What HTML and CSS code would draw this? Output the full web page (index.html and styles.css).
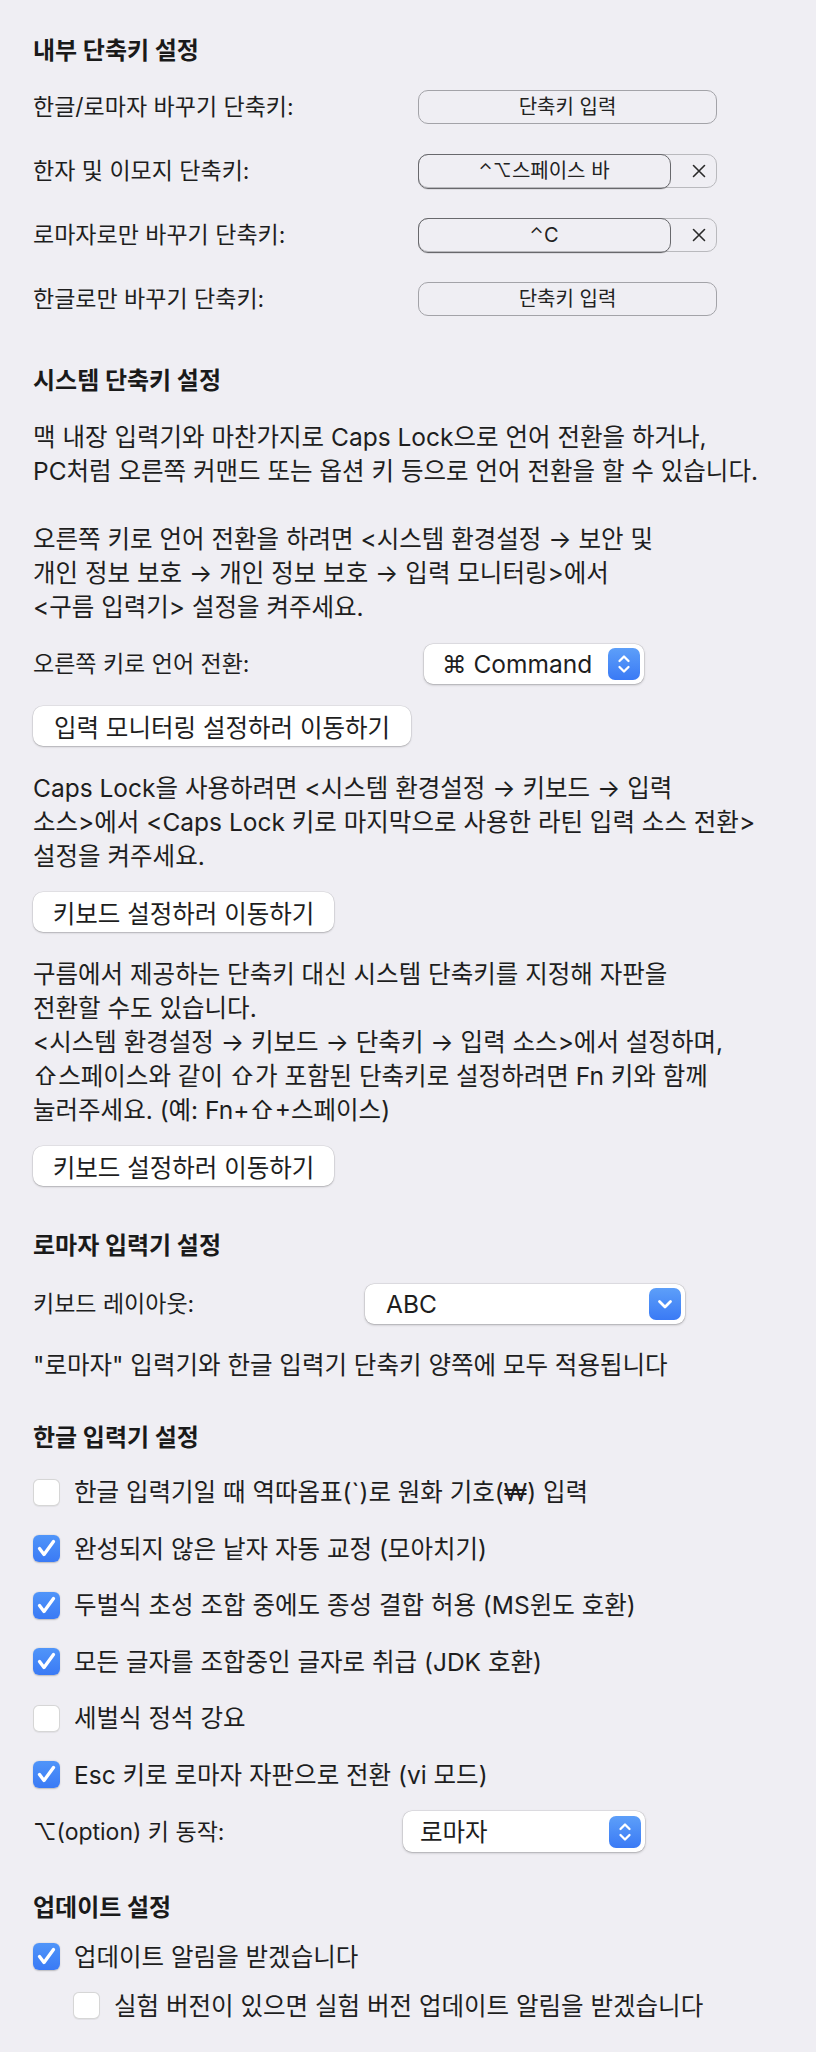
FILE: index.html
```html
<!DOCTYPE html>
<html lang="ko">
<head>
<meta charset="utf-8">
<title>구름 입력기 설정</title>
<link rel="stylesheet" href="styles.css">
</head>
<body>
<main class="prefs">

  <section class="sec sec-first">
    <h2 class="sec-title">내부 단축키 설정</h2>
    <div class="shortcut-rows">
      <div class="row row-shortcut">
        <span class="label">한글/로마자 바꾸기 단축키:</span>
        <button class="shortcut">단축키 입력</button>
      </div>
      <div class="row row-shortcut">
        <span class="label">한자 및 이모지 단축키:</span>
        <div class="shortcut shortcut-set">
          <span class="keys"><span class="mod">⌃⌥</span>스페이스 바</span>
          <span class="clear"><svg viewBox="0 0 16 16" width="16" height="16"><path d="M2.5 2.5L13.5 13.5M13.5 2.5L2.5 13.5"/></svg></span>
        </div>
      </div>
      <div class="row row-shortcut">
        <span class="label">로마자로만 바꾸기 단축키:</span>
        <div class="shortcut shortcut-set">
          <span class="keys"><span class="mod">⌃</span>C</span>
          <span class="clear"><svg viewBox="0 0 16 16" width="16" height="16"><path d="M2.5 2.5L13.5 13.5M13.5 2.5L2.5 13.5"/></svg></span>
        </div>
      </div>
      <div class="row row-shortcut">
        <span class="label">한글로만 바꾸기 단축키:</span>
        <button class="shortcut">단축키 입력</button>
      </div>
    </div>
  </section>

  <section class="sec">
    <h2 class="sec-title">시스템 단축키 설정</h2>
    <div class="text text-first">
      <p>맥 내장 입력기와 마찬가지로 Caps Lock으로 언어 전환을 하거나,<br>PC처럼 오른쪽 커맨드 또는 옵션 키 등으로 언어 전환을 할 수 있습니다.</p>
      <p>오른쪽 키로 언어 전환을 하려면 &lt;시스템 환경설정 → 보안 및<br>개인 정보 보호 → 개인 정보 보호 → 입력 모니터링&gt;에서<br>&lt;구름 입력기&gt; 설정을 켜주세요.</p>
    </div>
    <div class="row row-rightkey">
      <span class="label">오른쪽 키로 언어 전환:</span>
      <div class="popup popup-cmd">
        <span class="popup-value">⌘ Command</span>
        <span class="stepper"><svg viewBox="0 0 32 32" width="32" height="32"><path d="M11.5 13L16 8.5L20.5 13M11.5 19L16 23.5L20.5 19"/></svg></span>
      </div>
    </div>
    <button class="btn btn-monitor">입력 모니터링 설정하러 이동하기</button>
    <div class="text">
      <p>Caps Lock을 사용하려면 &lt;시스템 환경설정 → 키보드 → 입력<br>소스&gt;에서 &lt;Caps Lock 키로 마지막으로 사용한 라틴 입력 소스 전환&gt;<br>설정을 켜주세요.</p>
    </div>
    <button class="btn btn-kbd">키보드 설정하러 이동하기</button>
    <div class="text">
      <p>구름에서 제공하는 단축키 대신 시스템 단축키를 지정해 자판을<br>전환할 수도 있습니다.<br>&lt;시스템 환경설정 → 키보드 → 단축키 → 입력 소스&gt;에서 설정하며,<br>⇧스페이스와 같이 ⇧가 포함된 단축키로 설정하려면 Fn 키와 함께<br>눌러주세요. (예: Fn+⇧+스페이스)</p>
    </div>
    <button class="btn btn-kbd">키보드 설정하러 이동하기</button>
  </section>

  <section class="sec sec-roman">
    <h2 class="sec-title">로마자 입력기 설정</h2>
    <div class="row row-layout">
      <span class="label">키보드 레이아웃:</span>
      <div class="popup popup-layout">
        <span class="popup-value">ABC</span>
        <span class="stepper"><svg viewBox="0 0 32 32" width="32" height="32"><path class="thick" d="M10.5 13.5L16 19L21.5 13.5"/></svg></span>
      </div>
    </div>
    <p class="note">"로마자" 입력기와 한글 입력기 단축키 양쪽에 모두 적용됩니다</p>
  </section>

  <section class="sec sec-hangul">
    <h2 class="sec-title">한글 입력기 설정</h2>
    <div class="checks">
      <label class="check"><span class="box"></span><span>한글 입력기일 때 역따옴표(`)로 원화 기호(₩) 입력</span></label>
      <label class="check"><span class="box on"><svg viewBox="0 0 27 27" width="27" height="27"><path d="M6.5 13.5L11 19.5L20.5 6.5"/></svg></span><span>완성되지 않은 낱자 자동 교정 (모아치기)</span></label>
      <label class="check"><span class="box on"><svg viewBox="0 0 27 27" width="27" height="27"><path d="M6.5 13.5L11 19.5L20.5 6.5"/></svg></span><span>두벌식 초성 조합 중에도 종성 결합 허용 (MS윈도 호환)</span></label>
      <label class="check"><span class="box on"><svg viewBox="0 0 27 27" width="27" height="27"><path d="M6.5 13.5L11 19.5L20.5 6.5"/></svg></span><span>모든 글자를 조합중인 글자로 취급 (JDK 호환)</span></label>
      <label class="check"><span class="box"></span><span>세벌식 정석 강요</span></label>
      <label class="check"><span class="box on"><svg viewBox="0 0 27 27" width="27" height="27"><path d="M6.5 13.5L11 19.5L20.5 6.5"/></svg></span><span>Esc 키로 로마자 자판으로 전환 (vi 모드)</span></label>
    </div>
    <div class="row row-option">
      <span class="label">⌥(option) 키 동작:</span>
      <div class="popup popup-option">
        <span class="popup-value">로마자</span>
        <span class="stepper"><svg viewBox="0 0 32 32" width="32" height="32"><path d="M11.5 13L16 8.5L20.5 13M11.5 19L16 23.5L20.5 19"/></svg></span>
      </div>
    </div>
  </section>

  <section class="sec sec-update">
    <h2 class="sec-title">업데이트 설정</h2>
    <label class="check check-update"><span class="box on"><svg viewBox="0 0 27 27" width="27" height="27"><path d="M6.5 13.5L11 19.5L20.5 6.5"/></svg></span><span>업데이트 알림을 받겠습니다</span></label>
    <label class="check check-sub"><span class="box"></span><span>실험 버전이 있으면 실험 버전 업데이트 알림을 받겠습니다</span></label>
  </section>

</main>
</body>
</html>
```
FILE: styles.css
```css
* { box-sizing: border-box; }

html, body {
  margin: 0;
  padding: 0;
}

body {
  background: #efeef3;
  color: #1e1e1e;
  font-family: Inter, "Noto Sans CJK KR", sans-serif;
  font-size: 24.5px;
  line-height: 34px;
}

.prefs {
  width: 816px;
  padding: 39px 0 0 33px;
}

p { margin: 0; }

.sec-title {
  margin: 0;
  font-size: 24px;
  font-weight: 700;
  line-height: 24px;
  color: #1a1a1a;
}

.sec { margin-top: 53px; }
.sec-first { margin-top: 0; }
.sec-roman { margin-top: 48px; }
.sec-hangul { margin-top: 44px; }
.sec-update { margin-top: 43.5px; }

/* rows with a label and a control */
.row {
  display: flex;
  align-items: center;
  white-space: nowrap;
}

.row .label {
  flex: 0 0 auto;
  font-size: 23px;
}

.row-shortcut { height: 34px; }
.row-shortcut .label { width: 385px; }

.shortcut-rows {
  margin-top: 27px;
  display: flex;
  flex-direction: column;
  gap: 30px;
}

/* shortcut recorder */
.shortcut {
  width: 299px;
  height: 34px;
  margin: 0;
  padding: 0;
  border: 1.5px solid #a3a3a8;
  border-radius: 10px;
  background: transparent;
  font-family: Inter, "Noto Sans CJK KR", sans-serif;
  font-size: 20px;
  line-height: 24px;
  color: #222;
  display: flex;
  align-items: center;
  justify-content: center;
}

.shortcut-set {
  justify-content: flex-start;
  border-color: #b9b9bd;
}

.shortcut-set .keys {
  align-self: stretch;
  width: 253px;
  margin: -1.5px 0 -1.5px -1.5px;
  border: 1.5px solid #68686c;
  border-radius: 10px;
  box-shadow: 0 1px 0 rgba(0, 0, 0, 0.08);
  display: flex;
  align-items: center;
  justify-content: center;
}

.mod {
  font-size: 18px;
  letter-spacing: 0.5px;
}

.shortcut-set .clear {
  flex: 1;
  display: flex;
  justify-content: center;
  padding-left: 12px;
}

.clear svg path {
  stroke: #2a2a2a;
  stroke-width: 1.6;
  fill: none;
  stroke-linecap: round;
}

/* paragraphs */
.text {
  white-space: nowrap;
  margin-top: 25px;
}

.text-first { margin-top: 27px; }
.text p + p { margin-top: 34px; }

/* push buttons */
.btn {
  display: block;
  height: 40px;
  margin: 19px 0 0 0;
  padding: 0;
  border: none;
  border-radius: 10px;
  background: #fff;
  box-shadow: 0 0 0 0.5px rgba(0, 0, 0, 0.1), 0 1px 2px rgba(0, 0, 0, 0.22);
  font-family: Inter, "Noto Sans CJK KR", sans-serif;
  font-size: 24.5px;
  color: #1e1e1e;
  text-align: center;
  white-space: nowrap;
}

.btn-monitor { width: 378px; margin-top: 22px; }
.btn-kbd { width: 301px; }

/* popup buttons */
.popup {
  height: 40px;
  padding: 0 4px 0 18px;
  border-radius: 9px;
  background: #fff;
  box-shadow: 0 0 0 0.5px rgba(0, 0, 0, 0.12), 0 1px 2.5px rgba(0, 0, 0, 0.25);
  display: flex;
  align-items: center;
  justify-content: space-between;
  font-size: 24.5px;
}

.stepper {
  width: 32px;
  height: 32px;
  border-radius: 7px;
  background: linear-gradient(#5d9ff9, #3a7af5);
  display: flex;
}

.stepper path {
  fill: none;
  stroke: #fff;
  stroke-width: 2.3;
  stroke-linecap: round;
  stroke-linejoin: round;
}

.stepper path.thick { stroke-width: 2.8; }

.row-rightkey { margin-top: 20px; height: 40px; }
.row-rightkey .label { width: 391px; }
.popup-cmd { width: 220px; }

.row-layout { margin-top: 26px; height: 40px; }
.row-layout .label { width: 332px; }
.popup-layout { width: 320px; padding-left: 21px; }

.row-option { margin-top: 22.5px; height: 41px; }
.row-option .label { width: 370px; }
.popup-option { width: 242px; height: 41px; padding-left: 17px; }

.note {
  margin-top: 24px;
  white-space: nowrap;
}

/* checkboxes */
.checks {
  margin-top: 28px;
  display: flex;
  flex-direction: column;
  gap: 28.5px;
}

.check {
  display: flex;
  align-items: center;
  gap: 14px;
  height: 28px;
  white-space: nowrap;
}

.box {
  flex: 0 0 27px;
  width: 27px;
  height: 27px;
  border-radius: 6px;
  background: #fff;
  box-shadow: inset 0 0 0 1px rgba(0, 0, 0, 0.16), 0 0.5px 1px rgba(0, 0, 0, 0.06);
  display: flex;
}

.box.on {
  background: linear-gradient(#5095f9, #3a7af5);
  box-shadow: 0 0.5px 1.5px rgba(0, 0, 0, 0.22);
}

.box path {
  fill: none;
  stroke: #fff;
  stroke-width: 3.3;
  stroke-linecap: round;
  stroke-linejoin: round;
}

.check-update { margin-top: 23px; }
.check-sub { margin-top: 21px; padding-left: 40px; }
```
